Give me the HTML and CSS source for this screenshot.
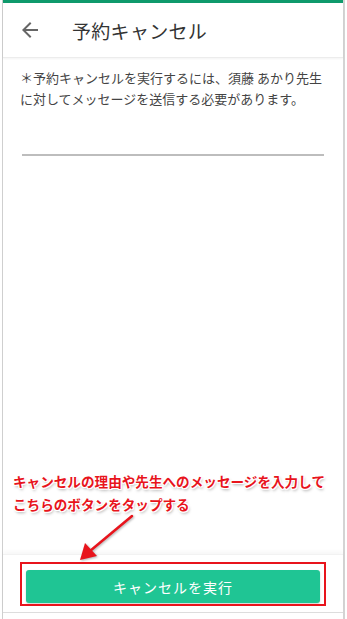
FILE: index.html
```html
<!DOCTYPE html>
<html lang="ja">
<head>
<meta charset="utf-8">
<title>予約キャンセル</title>
<link rel="stylesheet" href="styles.css">
</head>
<body>
<div class="page">
  <div class="frame">
    <div class="topbar"></div>
    <header class="header">
      <svg class="back" viewBox="0 0 24 24" aria-hidden="true"><path d="M20 11H7.83l5.59-5.59L12 4l-8 8 8 8 1.41-1.41L7.83 13H20v-2z"/></svg>
      <h1 class="title">予約キャンセル</h1>
    </header>
    <main class="content">
      <p class="note">＊予約キャンセルを実行するには、須藤 あかり先生<br>に対してメッセージを送信する必要があります。</p>
      <div class="input-line"></div>
    </main>
    <footer class="footer">
      <button class="submit">キャンセルを実行</button>
    </footer>
    <div class="bottom-gap"></div>
  </div>
  <div class="annot-text">キャンセルの理由や先生へのメッセージを入力して<br>こちらのボタンをタップする</div>
  <svg class="annot-arrow" width="60" height="50" viewBox="0 0 60 50" aria-hidden="true">
    <line x1="56" y1="3" x2="14" y2="38" stroke="#e8141c" stroke-width="2.5" stroke-linecap="round"/>
    <polygon points="4,47 9,30 21,43" fill="#e8141c"/>
  </svg>
  <div class="annot-box"></div>
</div>
</body>
</html>
```

FILE: styles.css
```css
html, body {
  margin: 0;
  padding: 0;
  background: #ffffff;
}

body {
  font-family: "Noto Sans CJK JP", "Noto Sans", sans-serif;
}

.page {
  position: relative;
  width: 347px;
  height: 619px;
  overflow: hidden;
}

.frame {
  margin-left: 2px;
  width: 340px;
  height: 619px;
  border-left: 1px solid #cfcfcf;
  border-right: 2px solid #d4d4d4;
  display: flex;
  flex-direction: column;
  background: #ffffff;
}

.topbar {
  height: 3px;
  background: #0f9a6c;
  flex: none;
}

.header {
  height: 54px;
  flex: none;
  display: flex;
  align-items: center;
  border-bottom: 1px solid #ececec;
  box-shadow: 0 1px 2px rgba(0, 0, 0, 0.05);
}

.back {
  width: 24px;
  height: 24px;
  margin-left: 15px;
  fill: #666666;
  flex: none;
}

.title {
  margin: 0 0 0 30px;
  font-size: 19px;
  font-weight: 400;
  color: #333333;
  letter-spacing: 0.3px;
}

.content {
  flex: 1;
  padding: 9px 0 0 17px;
}

.note {
  margin: 0;
  font-size: 13px;
  line-height: 21px;
  color: #444444;
  white-space: nowrap;
}

.input-line {
  margin-top: 45px;
  margin-left: 2px;
  width: 302px;
  height: 2px;
  background: #bdbdbd;
}

.footer {
  flex: none;
  height: 59px;
  box-sizing: border-box;
  padding-top: 15px;
  display: flex;
  justify-content: center;
  align-items: flex-start;
  border-top: 1px solid #f2f2f2;
  border-bottom: 1px solid #dddddd;
  box-shadow: 0 -3px 4px rgba(0, 0, 0, 0.03);
}

.submit {
  width: 294px;
  height: 33px;
  border: none;
  border-radius: 3px;
  background: #1fc594;
  color: #ffffff;
  font-family: "Noto Sans CJK JP", "Noto Sans", sans-serif;
  font-size: 14px;
  letter-spacing: 1px;
  box-shadow: 0 1px 2px rgba(0, 0, 0, 0.2);
  padding: 0;
}

.bottom-gap {
  flex: none;
  height: 6px;
}

.annot-text {
  position: absolute;
  left: 13px;
  top: 470px;
  font-size: 13.6px;
  line-height: 23px;
  font-weight: 700;
  color: #e8141c;
  white-space: nowrap;
  text-shadow:
    -1px 0 0 #fff, 1px 0 0 #fff, 0 -1px 0 #fff, 0 1px 0 #fff,
    1px 1px 0 #fff, -1px -1px 0 #fff, 1px -1px 0 #fff, -1px 1px 0 #fff,
    1px 2px 3px rgba(0, 0, 0, 0.35);
}

.annot-arrow {
  position: absolute;
  left: 76px;
  top: 513px;
  filter: drop-shadow(1px 1px 1px rgba(0, 0, 0, 0.3));
}

.annot-box {
  position: absolute;
  left: 20px;
  top: 562px;
  width: 302px;
  height: 40px;
  border: 2px solid #e8141c;
}
```
